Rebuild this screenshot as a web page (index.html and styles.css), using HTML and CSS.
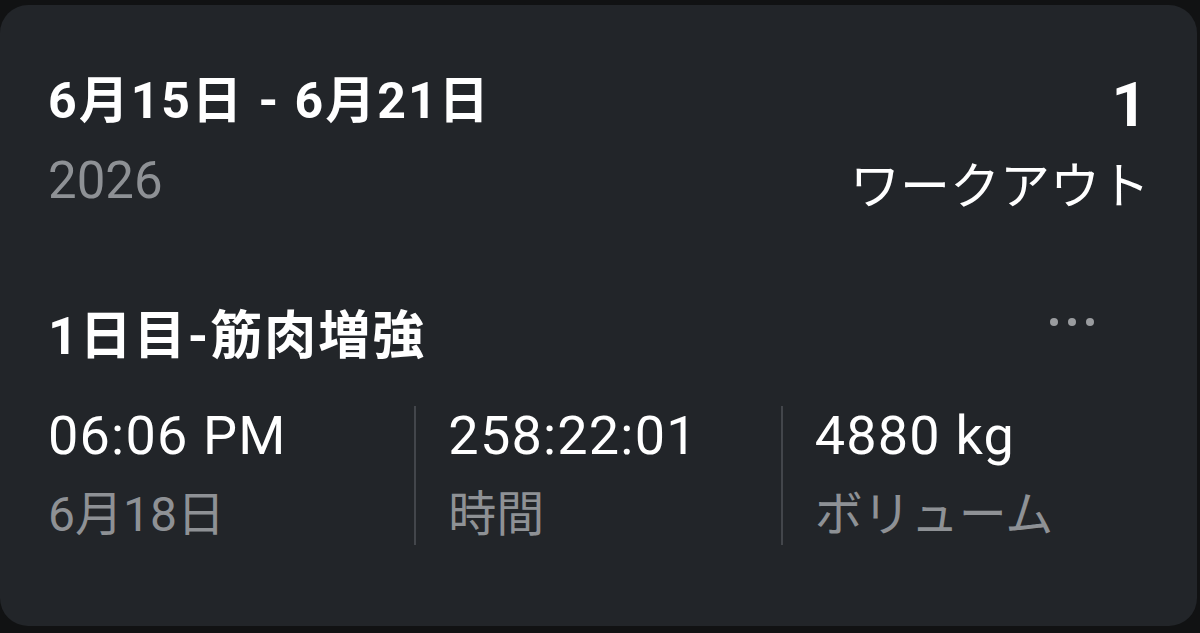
FILE: index.html
```html
<!DOCTYPE html>
<html lang="ja">
<head>
  <meta charset="UTF-8" />
  <meta name="viewport" content="width=device-width, initial-scale=1" />
  <title>週間サマリー</title>
  <link rel="stylesheet" href="styles.css">
</head>
<body>

<div class="week-card">
  <div class="week-head">
    <div class="week-range">
      <div class="range">6月15日 - 6月21日</div>
      <div class="year">2026</div>
    </div>
    <div class="week-count">
      <div class="count">1</div>
      <div class="count-label">ワークアウト</div>
    </div>
  </div>

  <div class="workout">
    <div class="workout-title">
      <div class="workout-name">1日目-筋肉増強</div>
      <div class="more">
        <span></span><span></span><span></span>
      </div>
    </div>
    <div class="stats">
      <div class="stat">
        <div class="stat-value">06:06 PM</div>
        <div class="stat-label">6月18日</div>
      </div>
      <div class="stat">
        <div class="stat-value">258:22:01</div>
        <div class="stat-label">時間</div>
      </div>
      <div class="stat">
        <div class="stat-value">4880 kg</div>
        <div class="stat-label">ボリューム</div>
      </div>
    </div>
  </div>
</div>

</body>
</html>
```

FILE: styles.css
```css
body {
  margin: 0;
  background: #111213;
  font-family: "Roboto", "Noto Sans CJK JP", sans-serif;
  color: #fff;
  height: 633px;
  overflow: hidden;
}

.week-card {
  box-sizing: border-box;
  margin: 5px 3px 0 0;
  height: 621px;
  background: #222529;
  border-radius: 28px;
  padding: 66px 50px 0 48px;
}

.week-head {
  display: flex;
  justify-content: space-between;
  align-items: flex-start;
}

.range {
  font-size: 50px;
  font-weight: bold;
  line-height: 60px;
  letter-spacing: 2px;
}

.year {
  font-size: 51px;
  line-height: 64px;
  margin-top: 18px;
  color: #8e9195;
}

.week-count {
  text-align: right;
}

.count {
  font-size: 62px;
  font-weight: bold;
  line-height: 68px;
}

.count-label {
  font-size: 50px;
  line-height: 60px;
  margin-top: 18px;
  margin-right: -3px;
}

.workout {
  margin-top: 90px;
}

.workout-title {
  display: flex;
  justify-content: space-between;
  align-items: flex-start;
}

.workout-name {
  font-size: 52px;
  font-weight: bold;
  line-height: 60px;
  letter-spacing: 2px;
}

.more {
  display: flex;
  gap: 10px;
  margin: 11px 53px 0 0;
}

.more span {
  width: 8px;
  height: 8px;
  border-radius: 50%;
  background: #9a9c9f;
}

.stats {
  display: grid;
  grid-template-columns: repeat(3, 1fr);
  margin-top: 39px;
}

.stat {
  padding-left: 32px;
  border-left: 2px solid #43464b;
  min-height: 133px;
}

.stat:first-child {
  padding-left: 0;
  border-left: none;
}

.stat-value {
  font-size: 54px;
  line-height: 60px;
  letter-spacing: 1.2px;
}

.stat-label {
  font-size: 48px;
  line-height: 60px;
  margin-top: 19px;
  color: #8e9195;
}
```
